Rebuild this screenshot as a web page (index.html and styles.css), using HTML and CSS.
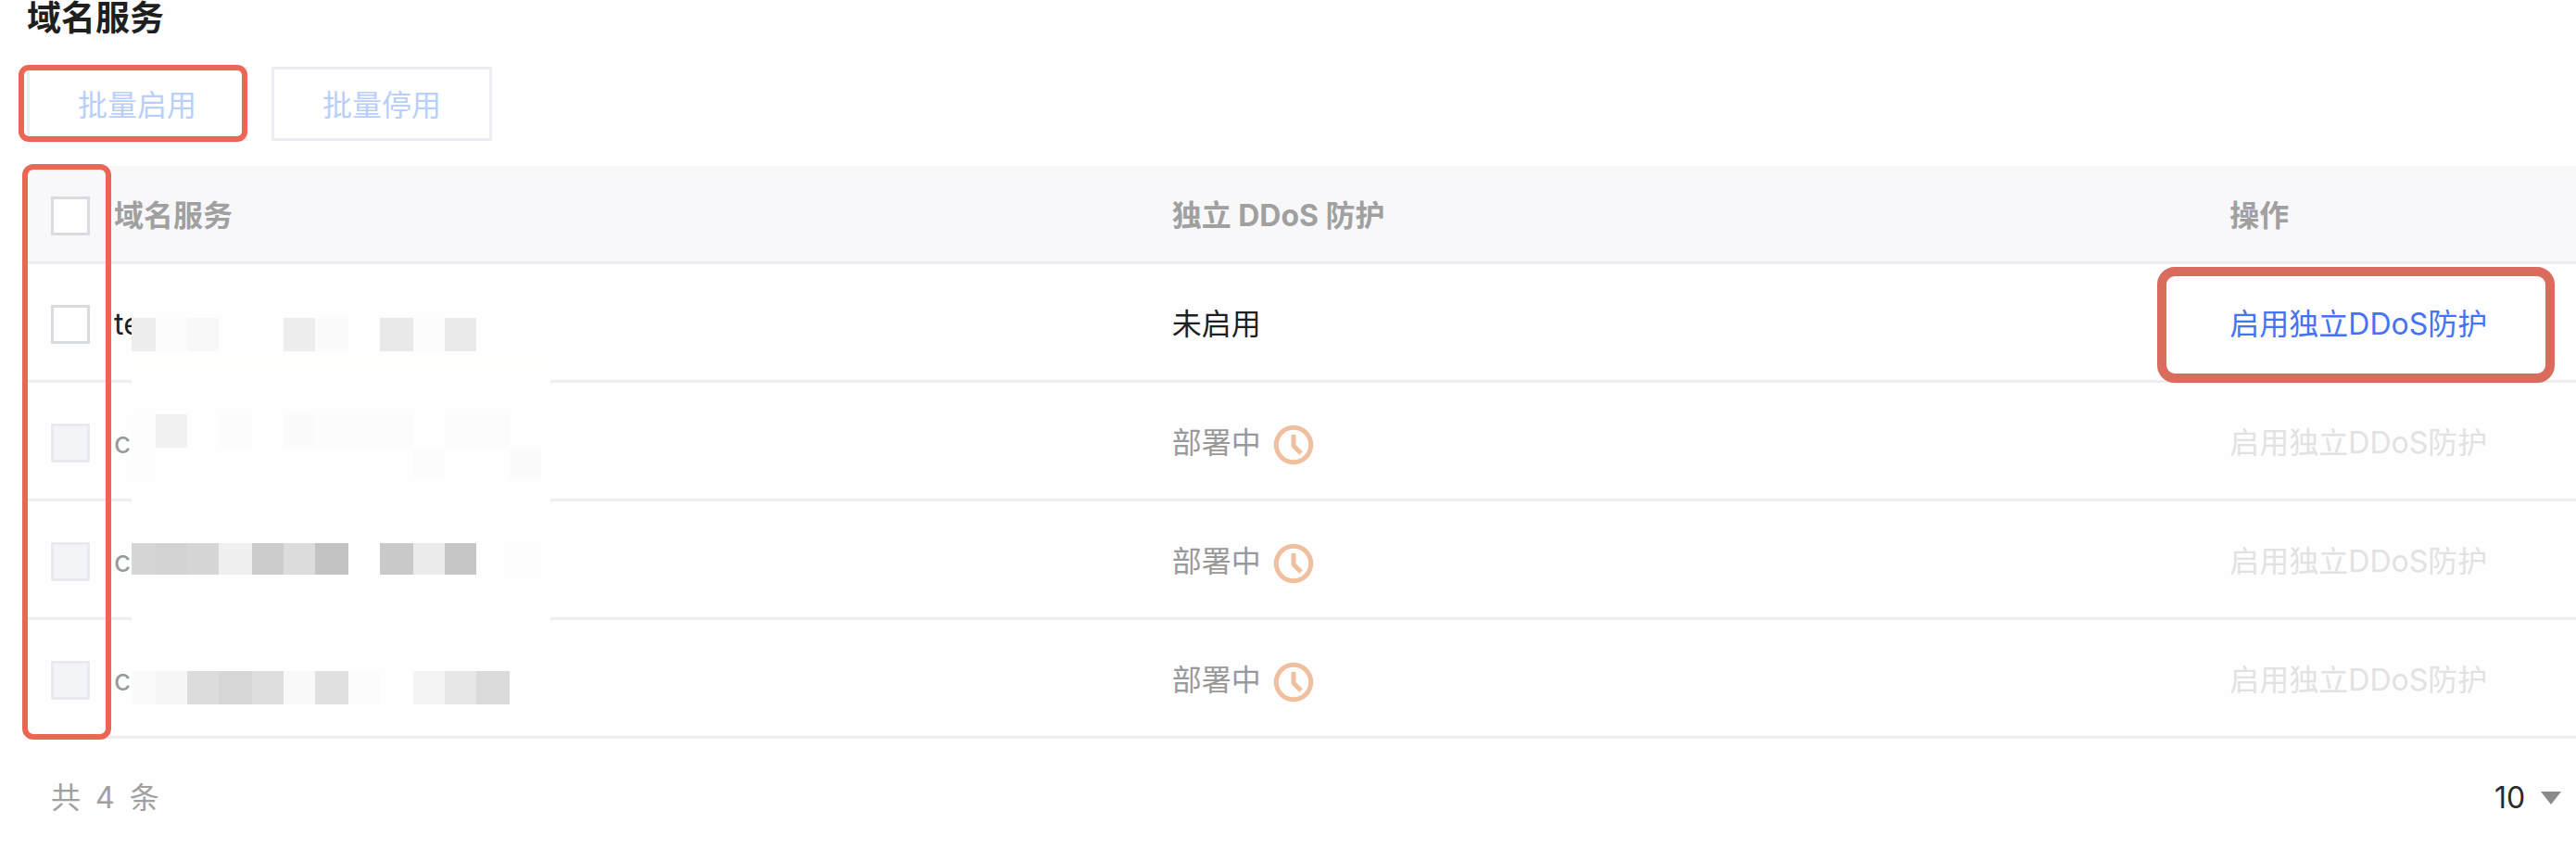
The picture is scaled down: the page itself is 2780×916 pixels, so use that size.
FILE: index.html
```
<!DOCTYPE html>
<html lang="zh-CN">

<head>
    <meta charset="UTF-8">
    <meta name="viewport" content="width=device-width, initial-scale=1.0">
    <title>域名服务</title>
    <link rel="stylesheet" href="styles.css">
</head>

<body>

    <main class="domain">
        <h1 class="domain__title">域名服务</h1>

        <div class="domain__actions">
            <div class="domain__action domain__action--marked">
                <button type="button" class="btn" disabled>批量启用</button>
            </div>
            <div class="domain__action">
                <button type="button" class="btn" disabled>批量停用</button>
            </div>
        </div>

        <div class="domain__list">
            <table class="table">
                <colgroup>
                    <col class="table__col--check">
                    <col class="table__col--name">
                    <col class="table__col--status">
                    <col>
                </colgroup>
                <thead>
                    <tr>
                        <th class="table__check"><input type="checkbox" class="checkbox" aria-label="全选"></th>
                        <th>域名服务</th>
                        <th>独立 DDoS 防护</th>
                        <th>操作</th>
                    </tr>
                </thead>
                <tbody>
                    <tr>
                        <td class="table__check"><input type="checkbox" class="checkbox" aria-label="选择"></td>
                        <td>te</td>
                        <td>未启用</td>
                        <td class="table__cell--marked"><a href="#" class="link">启用独立DDoS防护</a></td>
                    </tr>
                    <tr class="table__row--disabled">
                        <td class="table__check"><input type="checkbox" class="checkbox" aria-label="选择" disabled></td>
                        <td>c</td>
                        <td>
                            <div class="status">部署中
                                <svg class="status__icon" viewBox="0 0 44 44">
                                    <circle cx="22" cy="22" r="18.7" />
                                    <path d="M22 11v12l8 8" />
                                </svg>
                            </div>
                        </td>
                        <td><a class="link link--disabled">启用独立DDoS防护</a></td>
                    </tr>
                    <tr class="table__row--disabled">
                        <td class="table__check"><input type="checkbox" class="checkbox" aria-label="选择" disabled></td>
                        <td>c</td>
                        <td>
                            <div class="status">部署中
                                <svg class="status__icon" viewBox="0 0 44 44">
                                    <circle cx="22" cy="22" r="18.7" />
                                    <path d="M22 11v12l8 8" />
                                </svg>
                            </div>
                        </td>
                        <td><a class="link link--disabled">启用独立DDoS防护</a></td>
                    </tr>
                    <tr class="table__row--disabled">
                        <td class="table__check"><input type="checkbox" class="checkbox" aria-label="选择" disabled></td>
                        <td>c</td>
                        <td>
                            <div class="status">部署中
                                <svg class="status__icon" viewBox="0 0 44 44">
                                    <circle cx="22" cy="22" r="18.7" />
                                    <path d="M22 11v12l8 8" />
                                </svg>
                            </div>
                        </td>
                        <td><a class="link link--disabled">启用独立DDoS防护</a></td>
                    </tr>
                </tbody>
            </table>

            <!-- hides the domain names -->
            <svg class="mosaic" width="452" height="452" viewBox="0 0 452 452" shape-rendering="crispEdges">
                <rect width="452" height="452" fill="#fefefe" />
                <rect y="71" width="452" height="34" fill="#fefefc" />

                <rect x="0" y="35" width="26" height="36" fill="#ededed" />
                <rect x="26" y="35" width="34" height="36" fill="#fcfcfc" />
                <rect x="60" y="35" width="34" height="36" fill="#f8f8f8" />
                <rect x="164" y="35" width="34" height="36" fill="#ededed" />
                <rect x="198" y="35" width="36" height="36" fill="#fbfbfb" />
                <rect x="268" y="35" width="36" height="36" fill="#e9e9e9" />
                <rect x="304" y="35" width="34" height="36" fill="#fcfcfc" />
                <rect x="338" y="35" width="34" height="36" fill="#eaeaea" />

                <rect x="0" y="139" width="26" height="36" fill="#fdfdfd" />
                <rect x="26" y="139" width="34" height="36" fill="#f1f1f1" />
                <rect x="94" y="139" width="36" height="36" fill="#fcfcfc" />
                <rect x="164" y="139" width="34" height="36" fill="#fbfbfb" />
                <rect x="198" y="139" width="106" height="36" fill="#fcfcfc" />
                <rect x="338" y="139" width="70" height="36" fill="#fcfcfc" />
                <rect x="0" y="175" width="26" height="34" fill="#fdfdfd" />
                <rect x="304" y="175" width="34" height="34" fill="#fcfcfc" />
                <rect x="408" y="175" width="34" height="34" fill="#fbfbfb" />

                <rect x="0" y="278" width="26" height="34" fill="#d6d6d6" />
                <rect x="26" y="278" width="34" height="34" fill="#d3d3d3" />
                <rect x="60" y="278" width="34" height="34" fill="#d6d6d6" />
                <rect x="94" y="278" width="36" height="34" fill="#f0f0f0" />
                <rect x="130" y="278" width="34" height="34" fill="#cbcbcb" />
                <rect x="164" y="278" width="34" height="34" fill="#dcdcdc" />
                <rect x="198" y="278" width="36" height="34" fill="#c3c3c3" />
                <rect x="268" y="278" width="36" height="34" fill="#c9c9c9" />
                <rect x="304" y="278" width="34" height="34" fill="#ebebeb" />
                <rect x="338" y="278" width="34" height="34" fill="#c6c6c6" />
                <rect x="408" y="278" width="34" height="34" fill="#fdfdfd" />

                <rect x="0" y="416" width="26" height="36" fill="#fafafa" />
                <rect x="26" y="416" width="34" height="36" fill="#f6f6f6" />
                <rect x="60" y="416" width="34" height="36" fill="#dcdcdc" />
                <rect x="94" y="416" width="36" height="36" fill="#d7d7d7" />
                <rect x="130" y="416" width="34" height="36" fill="#dddddd" />
                <rect x="164" y="416" width="34" height="36" fill="#f9f9f9" />
                <rect x="198" y="416" width="36" height="36" fill="#e0e0e0" />
                <rect x="234" y="416" width="34" height="36" fill="#fcfcfc" />
                <rect x="304" y="416" width="34" height="36" fill="#f3f3f3" />
                <rect x="338" y="416" width="34" height="36" fill="#e7e7e7" />
                <rect x="372" y="416" width="36" height="36" fill="#dbdbdb" />
            </svg>
        </div>

        <div class="pager">
            <div class="pager__total"><span>共</span><span>4</span><span>条</span></div>
            <div class="pager__size">
                <select class="pager__select" aria-label="每页条数">
                    <option selected>10</option>
                    <option>20</option>
                    <option>50</option>
                </select>
                <svg class="pager__arrow" viewBox="0 0 22 14">
                    <path d="M0 0h22L11 14z" />
                </svg>
            </div>
        </div>
    </main>

</body>

</html>
```
FILE: styles.css
```
body{
    margin: 0;
    background-color: #fefefe;
    color: #1f1f1f;
    font-family: Inter, "Noto Sans CJK SC", sans-serif;
    font-size: 32px;
    line-height: 48px;
}

.domain{
    padding-left: 29px;
}

.domain__title{
    margin: 0;
    font-size: 37px;
    line-height: 40px;
    font-weight: 700;
}

.domain__actions{
    display: flex;
    gap: 26px;
    margin: 32px 0 27px;
}

.domain__action{
    position: relative;
}

.btn{
    display: block;
    width: 238px;
    height: 80px;
    padding: 3px 0 0;
    border: 3px solid #ececf2;
    background-color: #fff;
    color: #b9cffb;
    font: inherit;
}

.domain__action--marked::after{
    content: "";
    position: absolute;
    inset: -2px 0 -1px -9px;
    border: 6px solid #ea6756;
    border-radius: 11px;
}

.domain__list{
    position: relative;
}

/* frame round the checkbox column */
.domain__list::after{
    content: "";
    position: absolute;
    top: -2px;
    bottom: -1px;
    left: -5px;
    width: 96px;
    box-sizing: border-box;
    border: 6px solid #ea6756;
    border-radius: 12px;
    pointer-events: none;
}

.table{
    width: 100%;
    table-layout: fixed;
    border-collapse: separate;
    border-spacing: 0;
}

.table__col--check{
    width: 94px;
}

.table__col--name,
.table__col--status{
    width: 41.5%;
}

.table th,
.table td{
    box-sizing: border-box;
    height: 128px;
    padding: 4px 0 0;
    border-bottom: 3px solid #ececf1;
    text-align: left;
    vertical-align: middle;
}

.table th{
    height: 106px;
    background-color: #f8f8fb;
    color: #a0a0a0;
    font-weight: 700;
}

.table .table__check{
    padding-left: 26px;
}

.table__row--disabled{
    color: #999;
}

.checkbox{
    appearance: none;
    display: block;
    width: 42px;
    height: 42px;
    margin: 0;
    border: 3px solid #d8dbe2;
    background-color: #fff;
}

.checkbox:disabled{
    border-color: #e9eaef;
    background-color: #f3f4f7;
}

.table__cell--marked{
    position: relative;
}

.table__cell--marked::after{
    content: "";
    position: absolute;
    inset: 3px 23px -3px -78px;
    border: 10px solid #d96c5c;
    border-radius: 19px;
    pointer-events: none;
}

.link{
    color: #4673f5;
    text-decoration: none;
}

.link--disabled{
    color: #e2e2e2;
}

.status{
    display: flex;
    align-items: flex-end;
    gap: 13px;
}

.status__icon{
    width: 44px;
    height: 44px;
    fill: none;
    stroke: #f0bf9e;
    stroke-width: 5;
}

.mosaic{
    position: absolute;
    top: 129px;
    left: 113px;
}

.pager{
    display: flex;
    justify-content: space-between;
    align-items: center;
    padding: 40px 16px 30px 26px;
}

.pager__total{
    display: flex;
    gap: 16px;
    color: #a0a0a0;
}

.pager__size{
    display: flex;
    align-items: center;
    gap: 10px;
}

.pager__select{
    appearance: none;
    padding: 0;
    border: 0;
    background: none;
    color: #2b2b2b;
    font: inherit;
}

.pager__arrow{
    width: 22px;
    height: 14px;
    fill: #8b8b8b;
}
```
